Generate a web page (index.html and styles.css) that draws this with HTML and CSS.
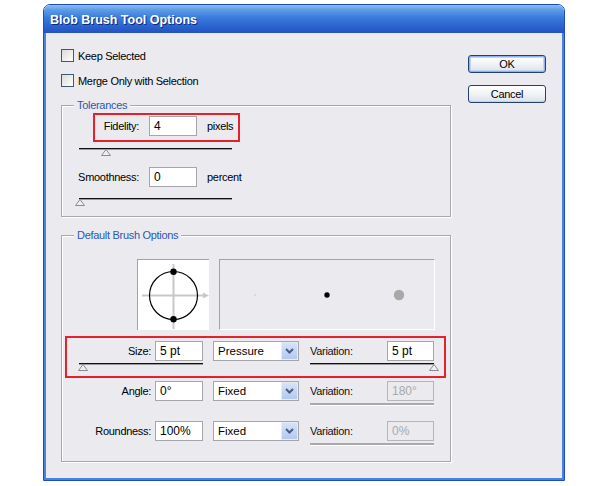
FILE: index.html
```html
<!DOCTYPE html>
<html>
<head>
<meta charset="utf-8">
<link rel="stylesheet" href="styles.css">
</head>
<body>
<div class="window">
  <div class="titlebar">Blob Brush Tool Options</div>
  <div class="client">
    <div class="main">
      <div class="check"><span class="box"></span><span>Keep Selected</span></div>
      <div class="check"><span class="box"></span><span>Merge Only with Selection</span></div>

      <div class="group tol">
        <div class="group-title">Tolerances</div>
        <div class="fid hl">
          <span class="tlbl fid-lbl">Fidelity:</span>
          <span class="field w48">4</span>
          <span class="unit">pixels</span>
        </div>
        <div class="slider tslider first">
          <div class="track"></div>
          <svg class="thumb" style="left:22px" width="10" height="7" viewBox="0 0 10 7"><polygon points="5,0.5 9.5,6.5 0.5,6.5" fill="#efefef" stroke="#8c8c8c"/></svg>
        </div>
        <div class="trow">
          <span class="tlbl smooth-lbl">Smoothness:</span>
          <span class="field w48">0</span>
          <span class="unit">percent</span>
        </div>
        <div class="slider tslider second">
          <div class="track"></div>
          <svg class="thumb" style="left:-4px" width="10" height="7" viewBox="0 0 10 7"><polygon points="5,0.5 9.5,6.5 0.5,6.5" fill="#efefef" stroke="#8c8c8c"/></svg>
        </div>
      </div>

      <div class="group brush">
        <div class="group-title">Default Brush Options</div>
        <div class="preview-row">
          <div class="tipbox">
            <svg width="71" height="70" viewBox="0 0 71 70">
              <line x1="4" y1="35.5" x2="66" y2="35.5" stroke="#c8c8c8" stroke-width="2"/>
              <path d="M65 32.5 L71 35.5 L65 38.5 Z" fill="#c8c8c8"/>
              <line x1="35.5" y1="4" x2="35.5" y2="69" stroke="#c8c8c8" stroke-width="2"/>
              <circle cx="35.5" cy="35.5" r="24" fill="none" stroke="#000" stroke-width="1.2"/>
              <circle cx="35.5" cy="11.7" r="3.2" fill="#000"/>
              <circle cx="35.5" cy="59.3" r="3.2" fill="#000"/>
            </svg>
          </div>
          <div class="panel">
            <svg width="215" height="70" viewBox="0 0 215 70">
              <circle cx="35" cy="35" r="1" fill="#d2d2d2"/>
              <circle cx="107" cy="35" r="2.7" fill="#000"/>
              <circle cx="179" cy="35" r="5.2" fill="#a8a8a8"/>
            </svg>
          </div>
        </div>

        <div class="brow hl">
          <span class="blbl">Size:</span>
          <span class="cell"><span class="field w48">5 pt</span></span>
          <span class="cell">
            <span class="select"><span class="sval">Pressure</span><span class="arrow"><svg width="9" height="6" viewBox="0 0 9 6"><path d="M1 1 L4.5 4.5 L8 1" fill="none" stroke="#4b5d80" stroke-width="2"/></svg></span></span>
          </span>
          <span class="vlbl">Variation:</span>
          <span class="field w47">5 pt</span>
          <div class="slider bslider left">
            <div class="track"></div>
            <svg class="thumb" style="left:-1px" width="10" height="7" viewBox="0 0 10 7"><polygon points="5,0.5 9.5,6.5 0.5,6.5" fill="#efefef" stroke="#8c8c8c"/></svg>
          </div>
          <div class="slider bslider right">
            <div class="track"></div>
            <svg class="thumb" style="left:119px" width="10" height="7" viewBox="0 0 10 7"><polygon points="5,0.5 9.5,6.5 0.5,6.5" fill="#efefef" stroke="#8c8c8c"/></svg>
          </div>
        </div>

        <div class="brow">
          <span class="blbl">Angle:</span>
          <span class="cell"><span class="field w48">0°</span></span>
          <span class="cell">
            <span class="select"><span class="sval">Fixed</span><span class="arrow"><svg width="9" height="6" viewBox="0 0 9 6"><path d="M1 1 L4.5 4.5 L8 1" fill="none" stroke="#4b5d80" stroke-width="2"/></svg></span></span>
          </span>
          <span class="vlbl">Variation:</span>
          <span class="field w47 disabled">180°</span>
          <div class="bar"></div>
        </div>

        <div class="brow last">
          <span class="blbl">Roundness:</span>
          <span class="cell"><span class="field w48">100%</span></span>
          <span class="cell">
            <span class="select"><span class="sval">Fixed</span><span class="arrow"><svg width="9" height="6" viewBox="0 0 9 6"><path d="M1 1 L4.5 4.5 L8 1" fill="none" stroke="#4b5d80" stroke-width="2"/></svg></span></span>
          </span>
          <span class="vlbl">Variation:</span>
          <span class="field w47 disabled">0%</span>
          <div class="bar"></div>
        </div>
      </div>
    </div>

    <div class="buttons">
      <div class="btn default">OK</div>
      <div class="btn">Cancel</div>
    </div>
  </div>
</div>
</body>
</html>
```
FILE: styles.css
```css
* { box-sizing: border-box; }

body {
  margin: 0;
  background: #fff;
  font-family: "Liberation Sans", Arial, sans-serif;
  font-size: 11px;
  letter-spacing: -0.3px;
  color: #000;
}

.window {
  margin: 4px 0 0 43px;
  width: 522px;
  height: 477px;
  border: 1px solid #1f4cbf;
  border-radius: 7px 7px 0 0;
  overflow: hidden;
  display: flex;
  flex-direction: column;
}

.titlebar {
  height: 28px;
  flex: none;
  padding: 4px 0 0 6px;
  line-height: 22px;
  font-size: 12.5px;
  font-weight: bold;
  letter-spacing: 0;
  color: #fff;
  text-shadow: 1px 1px 0 #0c2a7c;
  background: linear-gradient(#8dbff2 0%, #5b9be6 18%, #3a7bdc 45%, #2b64cf 75%, #2352c0 100%);
}

.client {
  flex: 1;
  background: #ebeaef;
  border: 2px solid #4a82e2;
  border-top: 0;
  display: flex;
  align-items: flex-start;
  padding: 16px 0 0 15px;
}

.main { width: 390px; flex: none; }

.check {
  display: flex;
  align-items: center;
  gap: 4px;
  height: 13px;
}
.check + .check { margin-top: 12px; }

.box {
  width: 13px;
  height: 13px;
  border: 1px solid #3c5a78;
  background: linear-gradient(135deg, #dbdbd6, #f4f4f2 70%, #fff);
}

.group {
  border: 1px solid #a9a9ab;
  box-shadow: inset 1px 1px 0 #fff, 1px 1px 0 #fff;
}

.group-title {
  display: table;
  height: 13px;
  line-height: 13px;
  margin: -7px 0 0 12px;
  padding: 0 3px;
  background: #ebeaef;
  color: #2c58b6;
}

.tol { margin-top: 18px; padding-bottom: 10px; }

.hl { border: 2px solid #e5222b; }

.fid {
  margin: 1px 0 0 31px;
  width: 147px;
  padding: 1px 0 4px;
  display: flex;
  align-items: center;
}

.trow {
  margin-top: 11px;
  display: flex;
  align-items: center;
}

.tlbl { text-align: right; margin-right: 10px; }
.fid-lbl { width: 44px; }
.smooth-lbl { width: 77px; }
.unit { margin-left: 10px; }

.field {
  display: block;
  height: 20px;
  border: 1px solid #a6a6aa;
  background: #fff;
  padding-left: 4px;
  line-height: 18px;
  font-size: 12px;
  letter-spacing: 0;
}
.w48 { width: 48px; }
.w47 { width: 47px; }
.field.disabled {
  background: transparent;
  border-color: #b6b6b9;
  color: #a9a9ab;
}

.slider { position: relative; height: 8px; }
.track {
  height: 2px;
  border-top: 1px solid #111;
  background: #9a9a9a;
}
.thumb { position: absolute; top: 1px; }

.tslider { margin-left: 17px; width: 153px; }
.tslider.first { margin-top: 6px; }
.tslider.second { margin-top: 11px; }

.brush { margin-top: 18px; padding-bottom: 15px; }

.preview-row {
  margin: 17px 0 0 75px;
  display: flex;
  gap: 10px;
}

.tipbox {
  width: 72px;
  height: 71px;
  background: #fff;
  border-top: 1px solid #a3a3a3;
  border-left: 1px solid #a3a3a3;
}
.tipbox svg, .panel svg { display: block; }

.panel {
  width: 216px;
  height: 71px;
  border-top: 1px solid #a3a3a3;
  border-left: 1px solid #a3a3a3;
  border-right: 1px solid #fff;
  border-bottom: 1px solid #fff;
}

.brow {
  margin-left: 3px;
  width: 381px;
  border-left: 2px solid transparent;
  border-right: 2px solid transparent;
  padding: 3px 10px 12px 0;
  display: grid;
  grid-template-columns: 88px 58px 97px 77px 47px;
  align-items: center;
}
.brow.hl {
  margin-top: 6px;
  border: 2px solid #e5222b;
  padding-bottom: 5px;
}
.brow.last { padding-bottom: 0; }

.blbl { text-align: right; padding-right: 4px; }
.vlbl { color: #111; }
.cell { display: block; }

.select {
  width: 86px;
  height: 20px;
  border: 1px solid #a6a6aa;
  background: #fff;
  display: flex;
}
.sval {
  flex: 1;
  padding-left: 4px;
  line-height: 18px;
  font-size: 11.5px;
  letter-spacing: 0;
}
.arrow {
  width: 17px;
  height: 18px;
  border: 1px solid #e6ecf8;
  background: linear-gradient(#d6e2fa, #b4c9ee);
  display: flex;
  align-items: center;
  justify-content: center;
}

.bslider { margin-top: 2px; width: 124px; }
.bslider.left { grid-column: 1 / 3; margin-left: 12px; }
.bslider.right { grid-column: 4 / 6; }

.bar {
  grid-column: 4 / 6;
  margin-top: 2px;
  height: 3px;
  background: #a9a9ab;
  border-bottom: 1px solid #fff;
}

.buttons {
  margin: 6px 0 0 17px;
  display: flex;
  flex-direction: column;
  gap: 12px;
}

.btn {
  width: 78px;
  height: 18px;
  border: 1px solid #26406f;
  border-radius: 3px;
  background: linear-gradient(#ffffff, #f3f4f7 45%, #dfe4ee 90%, #cfd6e4);
  text-align: center;
  line-height: 16px;
  box-shadow: inset 0 -1px 0 #c5d0e6;
}
.btn.default {
  box-shadow: inset 0 0 0 1px #93b1e8, inset 0 0 0 2px #c3d4f2;
}
```
